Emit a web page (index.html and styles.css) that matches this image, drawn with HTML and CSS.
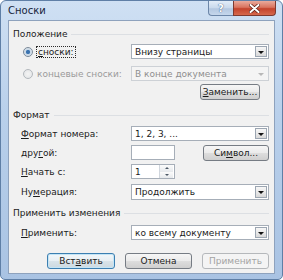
FILE: index.html
```html
<!DOCTYPE html>
<html lang="ru">
<head>
    <meta charset="UTF-8">
    <title>Сноски</title>
    <link rel="stylesheet" href="styles.css">
</head>
<body>
    <div class="window">
        <div class="titlebar">
            <span class="title">Сноски</span>
            <div class="caption-buttons">
                <span class="caption-help">?</span>
                <span class="caption-close">
                    <svg width="11" height="9" viewBox="0 0 11 9">
                        <path d="M1.5 1 L9.5 8 M9.5 1 L1.5 8" stroke="#5a1d14" stroke-width="3.4" stroke-linecap="round"/>
                        <path d="M1.5 1 L9.5 8 M9.5 1 L1.5 8" stroke="#ffffff" stroke-width="2" stroke-linecap="round"/>
                    </svg>
                </span>
            </div>
        </div>

        <div class="client">
            <div class="group-title"><span>Положение</span></div>

            <div class="row row-first">
                <div class="label radio-label">
                    <span class="radio checked"></span>
                    <span class="focus"><u>с</u>носки:</span>
                </div>
                <div class="combo">
                    <span class="combo-text">Внизу страницы</span>
                    <span class="combo-arrow"></span>
                </div>
            </div>

            <div class="row row-end">
                <div class="label radio-label disabled">
                    <span class="radio"></span>
                    <span>концевые сноски:</span>
                </div>
                <div class="combo disabled">
                    <span class="combo-text">В конце документа</span>
                    <span class="combo-arrow"></span>
                </div>
            </div>

            <div class="row row-replace">
                <button class="button button-replace" type="button"><u>З</u>аменить...</button>
            </div>

            <div class="group-title group-format"><span>Формат</span></div>

            <div class="row row-number">
                <div class="label"><span><u>Ф</u>ормат номера:</span></div>
                <div class="combo">
                    <span class="combo-text">1, 2, 3, ...</span>
                    <span class="combo-arrow"></span>
                </div>
            </div>

            <div class="row row-custom">
                <div class="label"><span>дру<u>г</u>ой:</span></div>
                <div class="textbox"></div>
                <button class="button button-symbol" type="button">Си<u>м</u>вол...</button>
            </div>

            <div class="row row-start">
                <div class="label"><span><u>Н</u>ачать с:</span></div>
                <div class="textbox spin">
                    <span class="spin-text">1</span>
                    <span class="spin-buttons">
                        <span class="spin-up"></span>
                        <span class="spin-down"></span>
                    </span>
                </div>
            </div>

            <div class="row row-numbering">
                <div class="label"><span>Ну<u>м</u>ерация:</span></div>
                <div class="combo">
                    <span class="combo-text">Продолжить</span>
                    <span class="combo-arrow"></span>
                </div>
            </div>

            <div class="group-title group-apply"><span>Применить изменения</span></div>

            <div class="row row-apply">
                <div class="label"><span><u>П</u>рименить:</span></div>
                <div class="combo">
                    <span class="combo-text">ко всему документу</span>
                    <span class="combo-arrow"></span>
                </div>
            </div>

            <div class="row row-buttons">
                <button class="button button-default" type="button">Вст<u>а</u>вить</button>
                <button class="button" type="button">Отмена</button>
                <button class="button" type="button" disabled>Применить</button>
            </div>
        </div>
    </div>
</body>
</html>
```

FILE: styles.css
```css
body {
    margin: 0;
    background: #ffffff;
    font-family: "DejaVu Sans", sans-serif;
    font-size: 9px;
    color: #1b1b1b;
}

.window {
    box-sizing: border-box;
    width: 283px;
    height: 280px;
    padding: 0 7px;
    border: 1px solid #5f7fa6;
    border-radius: 6px 6px 5px 5px;
    background: linear-gradient(180deg, #cfe0f3 0%, #b9d0eb 40%, #a9c3e3 100%);
}

.titlebar {
    display: flex;
    align-items: flex-start;
    height: 18px;
}

.title {
    margin-top: 4px;
    font-size: 10px;
    color: #16233a;
}

.caption-buttons {
    display: flex;
    margin-left: auto;
    margin-right: -1px;
}

.caption-help,
.caption-close {
    display: flex;
    justify-content: center;
    align-items: center;
    height: 15px;
    box-sizing: border-box;
    border: 1px solid #6c86a8;
    border-top: none;
}

.caption-help {
    width: 25px;
    border-radius: 0 0 0 4px;
    border-right: none;
    background: linear-gradient(180deg, #e3edf8 0%, #c9d9ec 50%, #b3c7e0 55%, #c5d7ec 100%);
    font-family: "DejaVu Sans", sans-serif;
    font-weight: bold;
    font-size: 10px;
    color: #ffffff;
    text-shadow: 0 0 1px #4a6489, 0 0 1px #4a6489;
}

.caption-close {
    width: 43px;
    border-color: #7e3a30;
    border-radius: 0 0 4px 0;
    background: linear-gradient(180deg, #e9aa9c 0%, #d9745f 45%, #c3432c 55%, #d6694d 100%);
}

.client {
    box-sizing: border-box;
    height: 254px;
    margin-top: 1px;
    padding: 0 5px 0 4px;
    border: 1px solid #8ea2bd;
    background: #f1f1f1;
}

.group-title {
    display: flex;
    align-items: center;
    height: 12px;
    margin-top: 7px;
}

.group-title::after {
    content: "";
    flex: 1;
    margin-left: 4px;
    border-top: 1px solid #dcdfe3;
}

.group-format {
    margin-top: 9px;
}

.group-apply {
    margin-top: 7px;
}

.row {
    display: flex;
    align-items: center;
    height: 15px;
    padding-left: 8px;
}

.row-first { margin-top: 4px; }
.row-end { margin-top: 7px; }
.row-replace { margin-top: 3px; height: 16px; justify-content: flex-end; padding-right: 9px; }
.row-number { margin-top: 5px; }
.row-custom { margin-top: 3px; height: 17px; }
.row-start { margin-top: 3px; }
.row-numbering { margin-top: 5px; height: 16px; }
.row-apply { margin-top: 6px; }
.row-buttons { margin-top: 13px; height: 16px; justify-content: flex-end; gap: 10px; padding-right: 0; }

.label {
    display: flex;
    align-items: center;
    width: 110px;
    flex-shrink: 0;
    white-space: nowrap;
}

.radio-label {
    gap: 4px;
    padding-left: 2px;
    width: 108px;
}

.radio-label.disabled {
    color: #9b9b9b;
}

.radio {
    width: 10px;
    height: 10px;
    box-sizing: border-box;
    border: 1px solid #b3b8bd;
    border-radius: 50%;
    background: radial-gradient(circle, #f4f4f4 0%, #e1e3e5 100%);
}

.radio.checked {
    border-color: #7c8a99;
    background: radial-gradient(circle, #3b6ea8 0%, #3f78b4 30%, #c9d8e6 45%, #eaeef2 100%);
}

.focus {
    outline: 1px dotted #2b2b2b;
    outline-offset: 0;
    padding: 0 1px;
}

.combo {
    display: flex;
    align-items: center;
    flex: 1;
    height: 100%;
    box-sizing: border-box;
    border: 1px solid #a6aeb8;
    background: #ffffff;
}

.combo-text {
    flex: 1;
    padding-left: 3px;
    white-space: nowrap;
}

.combo-arrow {
    position: relative;
    width: 12px;
    height: calc(100% - 2px);
    margin-right: 1px;
    box-sizing: border-box;
    border: 1px solid #9ca6b2;
    background: linear-gradient(180deg, #f7f7f7 0%, #e9e9e9 50%, #d8d8d8 100%);
}

.combo-arrow::after {
    content: "";
    position: absolute;
    left: 2px;
    top: 4px;
    border-left: 3px solid transparent;
    border-right: 3px solid transparent;
    border-top: 3px solid #111111;
}

.combo.disabled {
    border-color: #cdd1d6;
    background: #f4f4f4;
    color: #8f8f8f;
}

.combo.disabled .combo-arrow {
    border-color: #f4f4f4;
    background: #f4f4f4;
}

.combo.disabled .combo-arrow::after {
    border-top-color: #b8b8b8;
}

.textbox {
    display: flex;
    align-items: center;
    width: 44px;
    height: 15px;
    box-sizing: border-box;
    border: 1px solid #a6aeb8;
    background: #ffffff;
}

.spin-text {
    flex: 1;
    padding-left: 3px;
}

.spin-buttons {
    display: flex;
    flex-direction: column;
    width: 14px;
    height: 100%;
    margin-right: 1px;
}

.spin-up,
.spin-down {
    position: relative;
    flex: 1;
    border-left: 1px solid #d0d6dd;
    background: linear-gradient(180deg, #fbfbfb, #e6e9ec);
}

.spin-up::after,
.spin-down::after {
    content: "";
    position: absolute;
    left: 5px;
    top: 2px;
    border-left: 2px solid transparent;
    border-right: 2px solid transparent;
}

.spin-up::after {
    border-bottom: 2px solid #4d5966;
}

.spin-down::after {
    border-top: 2px solid #4d5966;
}

.button {
    height: 16px;
    padding: 0;
    box-sizing: border-box;
    border: 1px solid #767c84;
    border-radius: 3px;
    background: linear-gradient(180deg, #f6f6f6 0%, #ebebeb 48%, #dddddd 52%, #cfcfcf 100%);
    font-family: "DejaVu Sans", sans-serif;
    font-size: 9px;
    color: #1b1b1b;
    width: 67px;
}

.button u {
    text-decoration-thickness: 1px;
}

.button-replace {
    width: 60px;
}

.button-symbol {
    width: 66px;
    height: 16px;
    margin-left: auto;
}

.button-default {
    width: 68px;
    border-color: #3c7fb1;
    box-shadow: inset 0 0 0 1px #c4e5f6;
    background: linear-gradient(180deg, #f2f7fa 0%, #e8eff3 48%, #d9e3e9 52%, #cdd9e0 100%);
}

.button:disabled {
    border-color: #b5b8bb;
    background: #f4f4f4;
    color: #a3a3a3;
}
```
